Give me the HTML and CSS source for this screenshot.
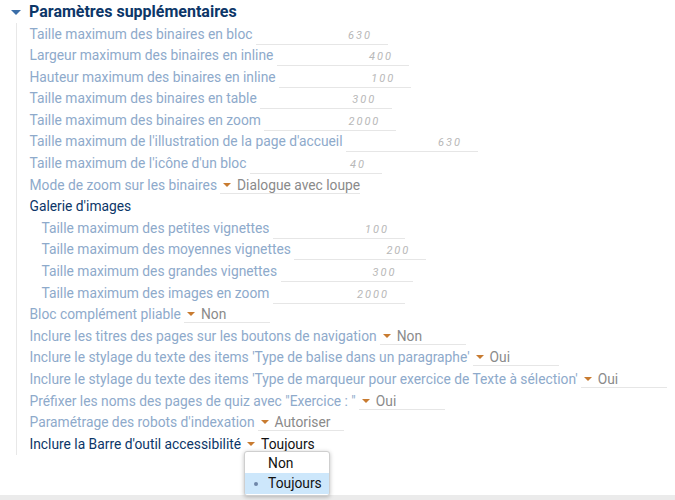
FILE: index.html
```html
<!DOCTYPE html>
<html lang="fr">
<head>
<meta charset="utf-8">
<title>Paramètres supplémentaires</title>
<link rel="stylesheet" href="styles.css">
</head>
<body>
<div class="page">
  <div class="section">
    <div class="sec-head">
      <span class="twisty"></span>
      <span class="sec-title">Paramètres supplémentaires</span>
    </div>
    <div class="sec-body">
      <div class="row"><span class="lbl">Taille maximum des binaires en bloc</span><span class="num">630</span></div>
      <div class="row"><span class="lbl">Largeur maximum des binaires en inline</span><span class="num">400</span></div>
      <div class="row"><span class="lbl">Hauteur maximum des binaires en inline</span><span class="num">100</span></div>
      <div class="row"><span class="lbl">Taille maximum des binaires en table</span><span class="num">300</span></div>
      <div class="row"><span class="lbl">Taille maximum des binaires en zoom</span><span class="num">2000</span></div>
      <div class="row"><span class="lbl">Taille maximum de l'illustration de la page d'accueil</span><span class="num">630</span></div>
      <div class="row"><span class="lbl">Taille maximum de l'icône d'un bloc</span><span class="num">40</span></div>
      <div class="row"><span class="lbl">Mode de zoom sur les binaires</span><span class="sel"><span class="arrow"></span><span class="val">Dialogue avec loupe</span></span></div>
      <div class="row"><span class="lbl dark">Galerie d'images</span></div>
      <div class="group">
        <div class="row"><span class="lbl">Taille maximum des petites vignettes</span><span class="num">100</span></div>
        <div class="row"><span class="lbl">Taille maximum des moyennes vignettes</span><span class="num">200</span></div>
        <div class="row"><span class="lbl">Taille maximum des grandes vignettes</span><span class="num">300</span></div>
        <div class="row"><span class="lbl">Taille maximum des images en zoom</span><span class="num">2000</span></div>
      </div>
      <div class="row"><span class="lbl">Bloc complément pliable</span><span class="sel"><span class="arrow"></span><span class="val">Non</span></span></div>
      <div class="row"><span class="lbl">Inclure les titres des pages sur les boutons de navigation</span><span class="sel"><span class="arrow"></span><span class="val">Non</span></span></div>
      <div class="row"><span class="lbl">Inclure le stylage du texte des items 'Type de balise dans un paragraphe'</span><span class="sel"><span class="arrow"></span><span class="val">Oui</span></span></div>
      <div class="row"><span class="lbl">Inclure le stylage du texte des items 'Type de marqueur pour exercice de Texte à sélection'</span><span class="sel"><span class="arrow"></span><span class="val">Oui</span></span></div>
      <div class="row"><span class="lbl">Préfixer les noms des pages de quiz avec "Exercice : "</span><span class="sel"><span class="arrow"></span><span class="val">Oui</span></span></div>
      <div class="row"><span class="lbl">Paramétrage des robots d'indexation</span><span class="sel"><span class="arrow"></span><span class="val">Autoriser</span></span></div>
      <div class="row"><span class="lbl dark">Inclure la Barre d'outil accessibilité</span><span class="sel open"><span class="arrow"></span><span class="val">Toujours</span>
        <span class="popup">
          <span class="opt">Non</span>
          <span class="opt current"><span class="dot"></span>Toujours</span>
        </span>
      </span></div>
    </div>
  </div>
</div>
<div class="footer-bar"></div>
</body>
</html>
```
FILE: styles.css
```css
html, body {
  margin: 0;
  padding: 0;
  background: #fff;
}
body {
  width: 675px;
  height: 500px;
  position: relative;
  overflow: hidden;
  font-family: Roboto, "Liberation Sans", sans-serif;
  font-size: 13.8px;
}
.sec-head {
  display: flex;
  align-items: center;
  height: 23px;
  padding-left: 11px;
}
.twisty {
  width: 0;
  height: 0;
  border-left: 5.5px solid transparent;
  border-right: 5.5px solid transparent;
  border-top: 5px solid #3b6ea8;
  margin-right: 8px;
  margin-top: 1px;
}
.sec-title {
  font-weight: 700;
  font-size: 16px;
  color: #0c3668;
}
.sec-body {
  margin-left: 16px;
  border-left: 1.5px solid #e8e8e8;
  padding-left: 12.5px;
  padding-top: 0.5px;
}
.group {
  padding-left: 12px;
}
.row {
  height: 21.6px;
  line-height: 21.6px;
  white-space: nowrap;
}
.lbl {
  color: #8eaacb;
}
.lbl.dark {
  color: #0c3668;
}
.num {
  display: inline-block;
  vertical-align: baseline;
  width: 132px;
  margin-left: 3.5px;
  line-height: 16px;
  border-bottom: 1px solid #e6e6e6;
  text-align: right;
  padding-right: 16px;
  box-sizing: border-box;
  font-size: 11px;
  font-style: italic;
  letter-spacing: 2px;
  color: #b8b8b8;
}
.sel {
  position: relative;
  display: inline-block;
  vertical-align: baseline;
  min-width: 86px;
  margin-left: 3px;
  line-height: 16px;
  border-bottom: 1px solid #e6e6e6;
  box-sizing: border-box;
}
.sel.open {
  border-bottom-color: transparent;
}
.arrow {
  display: inline-block;
  width: 0;
  height: 0;
  border-left: 4px solid transparent;
  border-right: 4px solid transparent;
  border-top: 4px solid #c87b30;
  margin-left: 3px;
  margin-right: 6px;
  vertical-align: 3px;
}
.val {
  color: #8a8a8a;
}
.sel.open .val {
  color: #111;
}
.popup {
  position: absolute;
  left: 0;
  top: 15px;
  width: 86px;
  box-sizing: border-box;
  background: #fff;
  border: 1px solid #cfcfcf;
  border-radius: 3px;
  box-shadow: 0 1px 4px rgba(0, 0, 0, 0.25);
  padding: 1px 0;
  z-index: 5;
}
.opt {
  display: block;
  height: 20.5px;
  line-height: 20.5px;
  padding-left: 23px;
  color: #111;
  position: relative;
}
.opt.current {
  background: #cde7fb;
}
.dot {
  position: absolute;
  left: 9px;
  top: 8.5px;
  width: 4px;
  height: 4px;
  border-radius: 50%;
  background: #6e86a8;
}
.footer-bar {
  position: absolute;
  left: 0;
  right: 0;
  bottom: 0;
  height: 5px;
  background: #ebebeb;
}
```
